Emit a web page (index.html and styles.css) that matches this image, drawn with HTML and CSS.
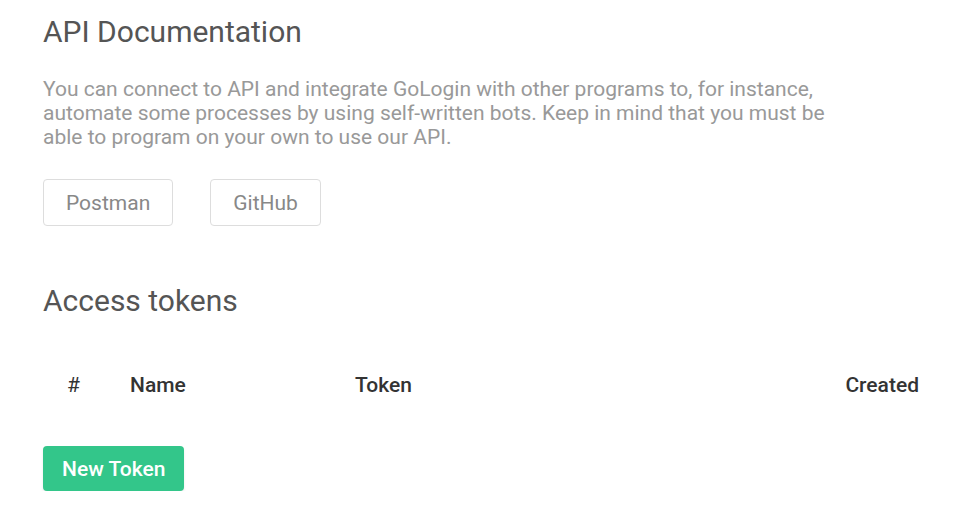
FILE: index.html
```html
<!DOCTYPE html>
<html lang="en">
<head>
<meta charset="utf-8">
<title>API Documentation</title>
<link rel="stylesheet" href="styles.css">
</head>
<body>
<main class="page">
  <section class="docs">
    <h1 class="title">API Documentation</h1>
    <p class="desc">You can connect to API and integrate GoLogin with other programs to, for instance, automate some processes by using self-written bots. Keep in mind that you must be able to program on your own to use our API.</p>
    <div class="links">
      <a class="link-btn postman" href="#">Postman</a>
      <a class="link-btn github" href="#">GitHub</a>
    </div>
  </section>
  <section class="tokens">
    <h2 class="title">Access tokens</h2>
    <div class="table-head">
      <span class="col col-num">#</span>
      <span class="col col-name">Name</span>
      <span class="col col-token">Token</span>
      <span class="col col-created">Created</span>
    </div>
    <button class="new-token" type="button">New Token</button>
  </section>
</main>
</body>
</html>
```
FILE: styles.css
```css
* { box-sizing: border-box; }
html, body { margin: 0; padding: 0; background: #fff; }
body { font-family: Roboto, "Noto Sans", Arial, sans-serif; }
.page { padding: 12px 14px 0 43px; }
.title {
  margin: 0;
  font-size: 30px;
  font-weight: 400;
  color: #555;
  line-height: 40px;
}
.desc {
  margin: 25px 0 0;
  width: 800px;
  font-size: 21px;
  line-height: 24px;
  color: #999;
}
.links { display: flex; gap: 37px; margin-top: 30px; }
.link-btn {
  display: flex; align-items: center; justify-content: center;
  height: 47px;
  padding: 0 22px;
  border: 1px solid #ddd;
  border-radius: 4px;
  font-size: 21px;
  color: #888;
  text-decoration: none;
}
.tokens { margin-top: 55px; }
.table-head {
  display: flex; align-items: center;
  height: 48px;
  margin-top: 40px;
  font-size: 21px;
  font-weight: 500;
  color: #333;
}
.col-num { width: 87px; padding-left: 24px; font-weight: 400; }
.col-name { width: 225px; }
.col-token { flex: 1; }
.col-created { padding-right: 24px; }
.new-token {
  margin-top: 37px;
  height: 45px;
  padding: 0 19px;
  border: none;
  border-radius: 4px;
  background: #33c68a;
  color: #fff;
  font-family: inherit;
  font-size: 21px;
  font-weight: 500;
  box-shadow: 0 2px 3px rgba(0,0,0,0.08);
}
```
